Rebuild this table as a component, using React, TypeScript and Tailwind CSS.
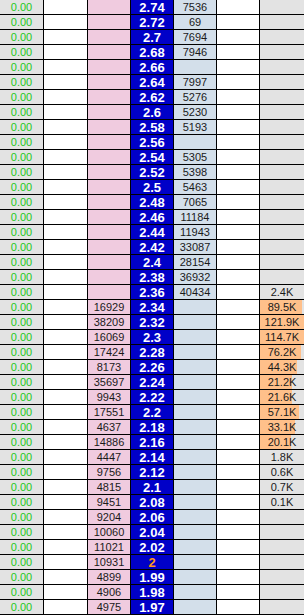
import React from "react";

type Row = { p: string; b?: string; a?: string; v?: string; w?: number; cur?: boolean };

const rows: Row[] = [
  { p: "2.74", a: "7536" },
  { p: "2.72", a: "69" },
  { p: "2.7", a: "7694" },
  { p: "2.68", a: "7946" },
  { p: "2.66" },
  { p: "2.64", a: "7997" },
  { p: "2.62", a: "5276" },
  { p: "2.6", a: "5230" },
  { p: "2.58", a: "5193" },
  { p: "2.56" },
  { p: "2.54", a: "5305" },
  { p: "2.52", a: "5398" },
  { p: "2.5", a: "5463" },
  { p: "2.48", a: "7065" },
  { p: "2.46", a: "11184" },
  { p: "2.44", a: "11943" },
  { p: "2.42", a: "33087" },
  { p: "2.4", a: "28154" },
  { p: "2.38", a: "36932" },
  { p: "2.36", a: "40434", v: "2.4K", w: 2.4 },
  { p: "2.34", b: "16929", v: "89.5K", w: 89.5 },
  { p: "2.32", b: "38209", v: "121.9K", w: 121.9 },
  { p: "2.3", b: "16069", v: "114.7K", w: 114.7 },
  { p: "2.28", b: "17424", v: "76.2K", w: 76.2 },
  { p: "2.26", b: "8173", v: "44.3K", w: 44.3 },
  { p: "2.24", b: "35697", v: "21.2K", w: 21.2 },
  { p: "2.22", b: "9943", v: "21.6K", w: 21.6 },
  { p: "2.2", b: "17551", v: "57.1K", w: 57.1 },
  { p: "2.18", b: "4637", v: "33.1K", w: 33.1 },
  { p: "2.16", b: "14886", v: "20.1K", w: 20.1 },
  { p: "2.14", b: "4447", v: "1.8K", w: 1.8 },
  { p: "2.12", b: "9756", v: "0.6K", w: 0.6 },
  { p: "2.1", b: "4815", v: "0.7K", w: 0.7 },
  { p: "2.08", b: "9451", v: "0.1K", w: 0.1 },
  { p: "2.06", b: "9204" },
  { p: "2.04", b: "10060" },
  { p: "2.02", b: "11021" },
  { p: "2", b: "10931", cur: true },
  { p: "1.99", b: "4899" },
  { p: "1.98", b: "4906" },
  { p: "1.97", b: "4975" },
];

const cell = "h-[14px] flex items-center justify-center leading-none";

const barPct = (w: number) =>
  Math.max(0, Math.min(100, (1 + 0.16 * Math.log(w / 121.9)) * 100));

export default function App() {
  return (
    <div
      className="w-[304px] h-[615px] overflow-hidden bg-black"
      style={{ fontFamily: '"Liberation Sans", Arial, sans-serif' }}
    >
      <div className="grid grid-cols-[43px_43px_42px_42px_42px_42px_44px] gap-px text-[11px] text-[#1a1a1a]">
        {rows.map((r, i) => (
          <React.Fragment key={i}>
            <div className={`${cell} bg-[#e3e3e3] text-[#1ec81e]`}>0.00</div>
            <div className={`${cell} bg-white`}></div>
            <div className={`${cell} bg-[#f0cbdf]`}>{r.b ?? ""}</div>
            <div
              className={`${cell} bg-[#0000c8] font-bold text-[13px] ${
                r.cur ? "text-[#ff9a1a]" : "text-white"
              }`}
            >
              {r.p}
            </div>
            <div className={`${cell} bg-[#d3dfea]`}>{r.a ?? ""}</div>
            <div className={`${cell} bg-white`}></div>
            <div className={`${cell} bg-[#e3e3e3] relative`}>
              {r.w !== undefined && r.w > 5 ? (
                <div
                  className="absolute left-0 top-0 bottom-0 bg-[#ffc08a]"
                  style={{ width: `${barPct(r.w)}%` }}
                />
              ) : null}
              <span className="relative">{r.v ?? ""}</span>
            </div>
          </React.Fragment>
        ))}
      </div>
    </div>
  );
}
